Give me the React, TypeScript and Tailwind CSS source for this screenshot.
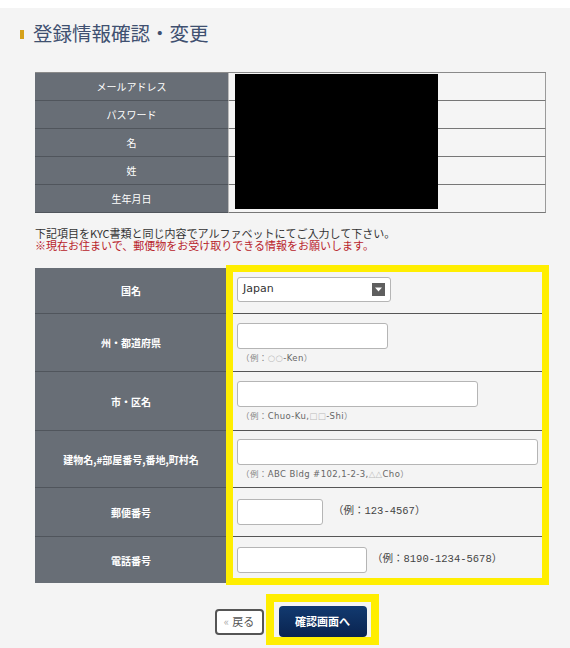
import { ReactNode } from "react";

const jp = { fontFamily: '"Noto Sans CJK JP", "Noto Sans", sans-serif' };
const mono = { fontFamily: '"Liberation Mono", "Noto Sans CJK JP", monospace' };
const hintFont = { fontFamily: '"DejaVu Sans", "Noto Sans CJK JP", sans-serif' };

const profileRows = ["メールアドレス", "パスワード", "名", "姓", "生年月日"];

const Hint = ({ children }: { children: ReactNode }) => (
  <div
    className="mt-[4px] pl-[4px] text-[8.5px] leading-[10px] tracking-[0.4px] text-[#888]"
    style={hintFont}
  >
    {children}
  </div>
);

const TextBox = ({ w }: { w: string }) => (
  <div className={`${w} h-[26px] rounded-[3px] border border-[#b5b5b5] bg-white`} />
);

const FormRow = ({
  label,
  h,
  last,
  children,
}: {
  label: string;
  h: string;
  last?: boolean;
  children: ReactNode;
}) => (
  <div className={`flex ${h}`}>
    <div
      className={`w-[192px] shrink-0 flex items-center justify-center bg-[#686e76] text-white text-[10px] font-bold ${
        last ? "" : "border-b border-[#50555c]"
      }`}
    >
      {label}
    </div>
    <div
      className={`flex-1 flex flex-col justify-center pl-[10px] bg-[#f4f4f4] border-r border-[#9a9a9a] ${
        last ? "border-b" : "border-b border-b-[#555]"
      }`}
    >
      {children}
    </div>
  </div>
);

export default function App() {
  return (
    <div className="w-[570px] h-[648px] bg-[#f4f4f4] overflow-hidden" style={jp}>
      <div className="h-[8px] bg-white" />

      {/* page title */}
      <div className="mt-[12px] ml-[20px] flex items-center h-[26px]">
        <div className="w-[4px] h-[9px] bg-[#d6a21a] mt-[2px]" />
        <h1 className="ml-[9px] text-[19.5px] leading-[26px] text-[#3f5070]">登録情報確認・変更</h1>
      </div>

      <div className="pl-[35px] pr-[24px]">
        {/* registered profile */}
        <div className="relative mt-[26px] border-t border-[#8a8a8a]">
          {profileRows.map((label) => (
            <div key={label} className="flex h-[28px]">
              <div className="w-[193px] shrink-0 flex items-center justify-center bg-[#686e76] text-white text-[10px] border-b border-[#50555c]">
                {label}
              </div>
              <div className="flex-1 bg-[#f5f5f5] border-b border-[#777] border-r border-r-[#9a9a9a] border-l border-l-[#bbb]" />
            </div>
          ))}
          <div className="absolute left-[200px] top-[1px] w-[203px] h-[135px] bg-black" />
        </div>

        <div className="mt-[14px] text-[11px] leading-[12px]">
          <p className="text-[#333]">下記項目をKYC書類と同じ内容でアルファベットにてご入力して下さい。</p>
          <p className="text-[#b8222a]">※現在お住まいで、郵便物をお受け取りできる情報をお願いします。</p>
        </div>

        {/* address form */}
        <div className="relative mt-[17px]">
          <FormRow label="国名" h="h-[46px]">
            <div className="w-[154px] h-[25px] rounded-[3px] border border-[#b5b5b5] bg-white flex items-center justify-between pl-[5px] pr-[5px] -mt-[3px]">
              <span className="text-[11px] text-[#333]" style={hintFont}>Japan</span>
              <span className="w-[13px] h-[13px] bg-[#5f5f5f] flex items-center justify-center">
                <svg width="7" height="5" viewBox="0 0 7 5">
                  <path d="M0 0.5 H7 L3.5 4.5 Z" fill="#fff" />
                </svg>
              </span>
            </div>
          </FormRow>
          <FormRow label="州・都道府県" h="h-[58px]">
            <TextBox w="w-[151px]" />
            <Hint>
              （例：<span className="text-[#bbb]">○○</span>
              <span className="text-[#666]">-Ken</span>）
            </Hint>
          </FormRow>
          <FormRow label="市・区名" h="h-[59px]">
            <TextBox w="w-[241px]" />
            <Hint>
              （例：<span className="text-[#666]">Chuo-Ku,</span>
              <span className="text-[#bbb]">□□</span>
              <span className="text-[#666]">-Shi</span>）
            </Hint>
          </FormRow>
          <FormRow label="建物名,#部屋番号,番地,町村名" h="h-[57px]">
            <TextBox w="w-[301px]" />
            <Hint>
              （例：<span className="text-[#666]">ABC Bldg #102,1-2-3,</span>
              <span className="text-[#bbb]">△△</span>
              <span className="text-[#666]">Cho</span>）
            </Hint>
          </FormRow>
          <FormRow label="郵便番号" h="h-[49px]">
            <div className="flex items-center">
              <TextBox w="w-[86px]" />
              <span className="ml-[10px] text-[10.5px] text-[#444]" style={mono}>（例：123-4567）</span>
            </div>
          </FormRow>
          <FormRow label="電話番号" h="h-[46px]" last>
            <div className="flex items-center">
              <TextBox w="w-[130px]" />
              <span className="ml-[5px] text-[10.5px] text-[#444]" style={mono}>（例：8190-1234-5678）</span>
            </div>
          </FormRow>
          <div className="absolute left-[191px] -top-[3px] w-[323px] h-[320px] border-[7px] border-[#ffee00] pointer-events-none" />
        </div>

        {/* actions */}
        <div className="mt-[23px] flex items-center justify-center gap-[15px]">
          <button className="w-[49px] h-[26px] rounded-[4px] border-2 border-[#555] bg-white text-[11px] text-[#555] flex items-center justify-center">
            <span className="text-[#aaa] mr-[3px]">«</span>戻る
          </button>
          <div className="relative">
            <button className="w-[88px] h-[31px] rounded-[4px] bg-gradient-to-b from-[#123a70] to-[#0a2450] text-white text-[11px] font-bold">
              確認画面へ
            </button>
            <div className="absolute -left-[13px] -top-[12px] w-[113px] h-[51px] border-[8px] border-[#ffee00] pointer-events-none" />
          </div>
        </div>
      </div>
    </div>
  );
}
